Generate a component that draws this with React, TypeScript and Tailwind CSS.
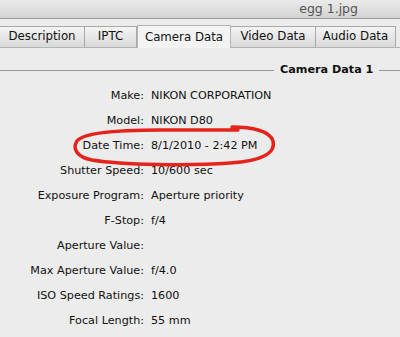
import React from 'react';

const rows: [string, string][] = [
  ['Make:', 'NIKON CORPORATION'],
  ['Model:', 'NIKON D80'],
  ['Date Time:', '8/1/2010 - 2:42 PM'],
  ['Shutter Speed:', '10/600 sec'],
  ['Exposure Program:', 'Aperture priority'],
  ['F-Stop:', 'f/4'],
  ['Aperture Value:', ''],
  ['Max Aperture Value:', 'f/4.0'],
  ['ISO Speed Ratings:', '1600'],
  ['Focal Length:', '55 mm'],
];

const tabs = [
  { label: 'Description', w: 'w-[85px]' },
  { label: 'IPTC', w: 'w-[52px]' },
  { label: 'Camera Data', w: 'w-[94px]', active: true },
  { label: 'Video Data', w: 'w-[85px]' },
  { label: 'Audio Data', w: 'w-[80px]' },
];

export default function App() {
  return (
    <div className="relative w-[400px] h-[337px] overflow-hidden bg-[#ececec] text-[#111] font-['Lucida_Grande','DejaVu_Sans',sans-serif] text-[11.2px]">
      {/* Title bar */}
      <div className="h-[19px] flex items-center justify-end pr-[42px] bg-gradient-to-b from-[#ebebeb] to-[#d3d3d3] border-b border-[#9c9c9c] text-[12.5px] text-[#555]">
        egg 1.jpg
      </div>

      {/* Tabs */}
      <div className="mt-[6px] flex items-end h-[23px] border-b border-[#b4b4b4] text-[11.8px]">
        {tabs.map((t) =>
          t.active ? (
            <div
              key={t.label}
              className={`${t.w} h-[23px] flex items-center justify-center bg-[#f3f3f3] border-x border-t border-[#b4b4b4] -mb-px pt-[2px]`}
            >
              {t.label}
            </div>
          ) : (
            <div
              key={t.label}
              className={`${t.w} h-[21px] flex items-center justify-center bg-gradient-to-b from-[#f4f4f4] to-[#d9d9d9] border-r border-t border-[#a9a9a9]`}
            >
              {t.label}
            </div>
          )
        )}
      </div>

      {/* Group header */}
      <div className="mt-[14px] flex items-center">
        <div className="w-[274px] h-px bg-[#9a9a9a]" />
        <div className="px-[6px] font-bold">Camera Data 1</div>
        <div className="flex-1 h-px bg-[#9a9a9a]" />
      </div>

      {/* Rows */}
      <div className="mt-[5px] flex flex-col">
        {rows.map(([k, v]) => (
          <div key={k} className="h-[25px] flex items-center">
            <div className="w-[144px] text-right">{k}</div>
            <div className="pl-[7px]">{v}</div>
          </div>
        ))}
      </div>

      {/* Hand-drawn circle */}
      <svg className="absolute left-0 top-0" width="400" height="337">
        <path
          d="M 232 127 C 252 127, 270 131, 273 141 C 276 153, 262 161, 230 163 C 190 166, 122 165, 92 160 C 77 157, 72 149, 77 141 C 84 132, 120 130, 160 130 L 238 130"
          fill="none"
          stroke="#e5231b"
          strokeWidth="3.4"
          strokeLinecap="round"
        />
      </svg>
    </div>
  );
}
